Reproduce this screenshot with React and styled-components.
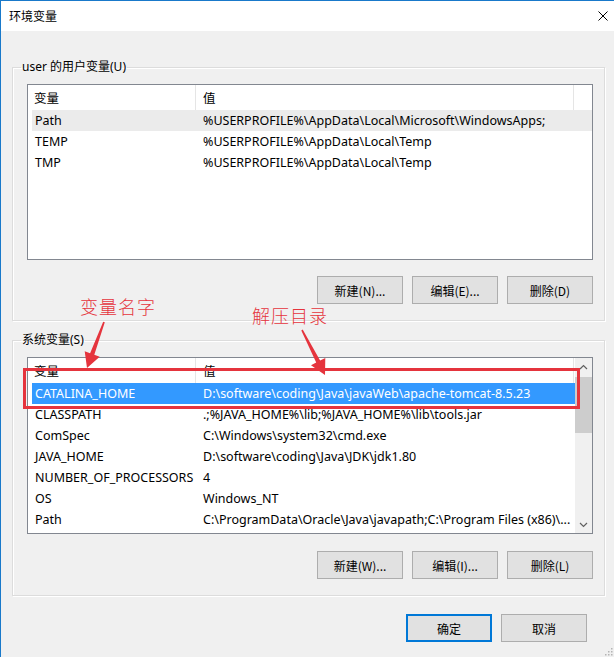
import React from 'react';
import styled, { createGlobalStyle } from 'styled-components';

const FONT = `"Noto Sans", "Noto Sans CJK SC", sans-serif`;
const CJK = `"Noto Sans CJK SC", "Noto Sans", sans-serif`;
const RED = '#e5343d';

const GlobalStyle = createGlobalStyle`
  html, body { margin: 0; padding: 0; background: #f0f0f0; }
  body { font-family: ${FONT}; font-size: 12px; }
  #root { width: 614px; height: 657px; }
`;

const Window = styled.div`
  position: relative;
  width: 614px;
  height: 657px;
  box-sizing: border-box;
  border-top: 1px solid #1979ca;
  border-left: 1px solid #1979ca;
  background: #f0f0f0;
  display: flex;
  flex-direction: column;
  overflow: hidden;
  font-family: ${FONT};
  font-size: 12px;
  color: #000;
`;

const TitleBar = styled.div`
  flex-shrink: 0;
  height: 30px;
  background: #fff;
  display: flex;
  align-items: center;
  justify-content: space-between;
  padding: 0 6px 0 8px;
`;

const Title = styled.span`
  font-family: ${CJK};
  font-size: 12px;
  line-height: 16px;
`;

const CloseButton = styled.span`
  display: flex;
  width: 10px;
  height: 10px;
`;

const Body = styled.div`
  display: flex;
  flex-direction: column;
  padding: 28px 9px 0 11px;
`;

const Group = styled.fieldset`
  margin: 0;
  min-width: 0;
  padding: 9px 11px 16px 14px;
  border: 1px solid #dcdcdc;
  box-shadow: inset 1px 1px 0 #fff, 1px 1px 0 #fff;
  & + & {
    margin-top: 11px;
  }
`;

const Legend = styled.legend`
  padding: 0 1px;
  margin-left: -6px;
  font-family: ${FONT};
  font-size: 12px;
  line-height: 16px;
`;

const ListBox = styled.div`
  height: ${(p) => p.$height}px;
  box-sizing: border-box;
  border: 1px solid #828790;
  background: #fff;
  display: flex;
  overflow: hidden;
`;

const ListContent = styled.div`
  flex: 1;
  min-width: 0;
`;

const HeaderRow = styled.div`
  display: grid;
  grid-template-columns: 168px 378px;
  height: 25px;
`;

const HeaderCell = styled.div`
  box-sizing: border-box;
  display: flex;
  align-items: center;
  padding-left: ${(p) => p.$pad}px;
  border-right: 1px solid #e5e5e5;
  font-family: ${CJK};
  font-size: 12.5px;
  line-height: 16px;
`;

const Row = styled.div`
  display: grid;
  grid-template-columns: 164px 378px;
  height: 21px;
  margin-left: 4px;
  align-items: center;
  background: ${(p) => (p.$selected ? '#3399ff' : p.$hover ? '#ebebeb' : 'transparent')};
  color: ${(p) => (p.$selected ? '#fff' : '#000')};
`;

const Cell = styled.div`
  padding-left: ${(p) => p.$pad}px;
  white-space: nowrap;
  overflow: hidden;
  font-size: 12.5px;
  line-height: 16px;
`;

const Scrollbar = styled.div`
  width: 17px;
  flex-shrink: 0;
  background: #f0f0f0;
  display: flex;
  flex-direction: column;
`;

const ScrollArrow = styled.div`
  height: 17px;
  display: flex;
  align-items: center;
  justify-content: center;
`;

const Thumb = styled.div`
  height: 56px;
  margin-top: 2px;
  background: #cdcdcd;
`;

const Track = styled.div`
  flex: 1;
`;

const ButtonRow = styled.div`
  display: flex;
  justify-content: flex-end;
  gap: 9px;
  margin-top: ${(p) => p.$top || 16}px;
  padding-right: ${(p) => p.$right || 0}px;
`;

const Button = styled.button`
  width: 86px;
  height: 28px;
  box-sizing: border-box;
  margin: 0;
  padding: 0;
  background: #e1e1e1;
  border: 1px solid ${(p) => (p.$default ? '#0078d7' : '#adadad')};
  box-shadow: ${(p) => (p.$default ? 'inset 0 0 0 1px #0078d7' : 'none')};
  font-family: ${CJK};
  font-size: 12px;
  color: #000;
`;

const Overlay = styled.svg`
  position: absolute;
  top: -1px;
  left: -1px;
  width: 614px;
  height: 657px;
  pointer-events: none;
`;

const Note = styled.span`
  position: absolute;
  left: ${(p) => p.$x}px;
  top: ${(p) => p.$y}px;
  font-family: ${CJK};
  font-weight: 300;
  font-size: 18px;
  line-height: 20px;
  letter-spacing: 1px;
  color: ${RED};
  white-space: nowrap;
`;

const Grip = styled.svg`
  position: absolute;
  right: 1px;
  bottom: 1px;
  width: 10px;
  height: 10px;
`;

function arrowPoints(x1, y1, x2, y2) {
  const dx = x2 - x1;
  const dy = y2 - y1;
  const L = Math.hypot(dx, dy);
  const ux = dx / L;
  const uy = dy / L;
  const px = -uy;
  const py = ux;
  const headLen = 15;
  const headW = 8;
  const neckW = 2.2;
  const tailW = 0.8;
  const bx = x2 - ux * headLen;
  const by = y2 - uy * headLen;
  const pts = [
    [x1 + px * tailW, y1 + py * tailW],
    [bx + px * neckW, by + py * neckW],
    [bx + px * headW, by + py * headW],
    [x2, y2],
    [bx - px * headW, by - py * headW],
    [bx - px * neckW, by - py * neckW],
    [x1 - px * tailW, y1 - py * tailW],
  ];
  return pts.map((p) => p.map((v) => v.toFixed(1)).join(',')).join(' ');
}

const Chevron = ({ up }) => (
  <svg width="9" height="6" viewBox="0 0 9 6">
    <path d={up ? 'M1 5 L4.5 1.5 L8 5' : 'M1 1 L4.5 4.5 L8 1'} fill="none" stroke="#606060" strokeWidth="1.2" />
  </svg>
);

const userVars = [
  { name: 'Path', value: '%USERPROFILE%\\AppData\\Local\\Microsoft\\WindowsApps;', hover: true },
  { name: 'TEMP', value: '%USERPROFILE%\\AppData\\Local\\Temp' },
  { name: 'TMP', value: '%USERPROFILE%\\AppData\\Local\\Temp' },
];

const sysVars = [
  { name: 'CATALINA_HOME', value: 'D:\\software\\coding\\Java\\javaWeb\\apache-tomcat-8.5.23', selected: true },
  { name: 'CLASSPATH', value: '.;%JAVA_HOME%\\lib;%JAVA_HOME%\\lib\\tools.jar' },
  { name: 'ComSpec', value: 'C:\\Windows\\system32\\cmd.exe' },
  { name: 'JAVA_HOME', value: 'D:\\software\\coding\\Java\\JDK\\jdk1.80' },
  { name: 'NUMBER_OF_PROCESSORS', value: '4' },
  { name: 'OS', value: 'Windows_NT' },
  { name: 'Path', value: 'C:\\ProgramData\\Oracle\\Java\\javapath;C:\\Program Files (x86)\\...' },
];

function VarList({ rows, height, scroll }) {
  return (
    <ListBox $height={height}>
      <ListContent>
        <HeaderRow>
          <HeaderCell $pad={6}>变量</HeaderCell>
          <HeaderCell $pad={7}>值</HeaderCell>
        </HeaderRow>
        {rows.map((r) => (
          <Row key={r.name} $selected={r.selected} $hover={r.hover}>
            <Cell $pad={3}>{r.name}</Cell>
            <Cell $pad={7}>{r.value}</Cell>
          </Row>
        ))}
      </ListContent>
      {scroll && (
        <Scrollbar>
          <ScrollArrow>
            <Chevron up />
          </ScrollArrow>
          <Thumb />
          <Track />
          <ScrollArrow>
            <Chevron />
          </ScrollArrow>
        </Scrollbar>
      )}
    </ListBox>
  );
}

export default function App() {
  return (
    <>
      <GlobalStyle />
      <Window>
        <TitleBar>
          <Title>环境变量</Title>
          <CloseButton>
            <svg width="10" height="10" viewBox="0 0 10 10">
              <path d="M0.5 0.5 L9.5 9.5 M9.5 0.5 L0.5 9.5" stroke="#000" strokeWidth="1" />
            </svg>
          </CloseButton>
        </TitleBar>
        <Body>
          <Group>
            <Legend>user 的用户变量(U)</Legend>
            <VarList rows={userVars} height={176} />
            <ButtonRow>
              <Button>新建(N)...</Button>
              <Button>编辑(E)...</Button>
              <Button>删除(D)</Button>
            </ButtonRow>
          </Group>
          <Group>
            <Legend>系统变量(S)</Legend>
            <VarList rows={sysVars} height={177} scroll />
            <ButtonRow $top={17}>
              <Button>新建(W)...</Button>
              <Button>编辑(I)...</Button>
              <Button>删除(L)</Button>
            </ButtonRow>
          </Group>
          <ButtonRow $top={18} $right={18}>
            <Button $default>确定</Button>
            <Button>取消</Button>
          </ButtonRow>
        </Body>

        <Overlay viewBox="0 0 614 657">
          <rect x="24.5" y="369.5" width="554" height="38" fill="none" stroke={RED} strokeWidth="3" />
          <polygon points={arrowPoints(104, 322, 87, 368)} fill={RED} />
          <polygon points={arrowPoints(302, 330, 325, 375)} fill={RED} />
        </Overlay>
        <Note $x={79} $y={295}>变量名字</Note>
        <Note $x={251} $y={304}>解压目录</Note>
        <Grip viewBox="0 0 10 10">
          {[
            [8, 2], [8, 5], [5, 5], [8, 8], [5, 8], [2, 8],
          ].map(([x, y]) => (
            <rect key={`${x}-${y}`} x={x} y={y} width="1.5" height="1.5" fill="#b4b4b4" />
          ))}
        </Grip>
      </Window>
    </>
  );
}
